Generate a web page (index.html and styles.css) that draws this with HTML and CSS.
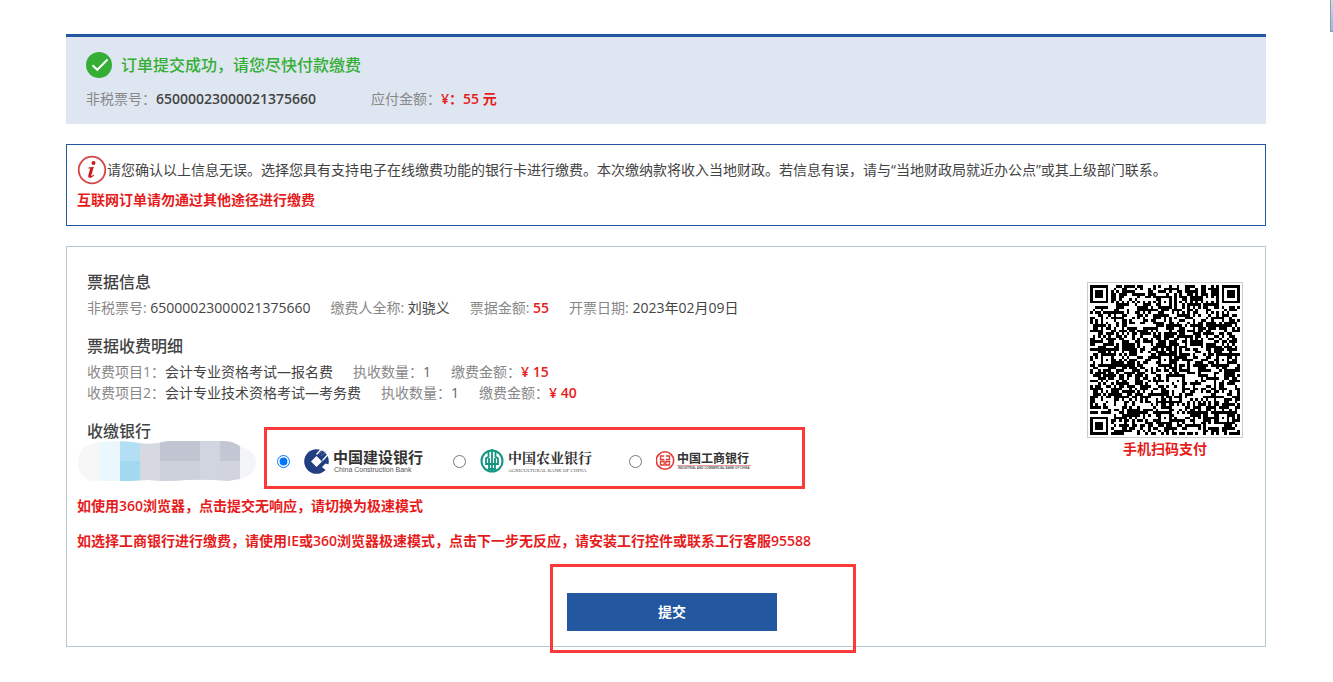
FILE: index.html
```html
<!DOCTYPE html>
<html lang="zh-CN">
<head>
<meta charset="utf-8">
<title>订单缴费</title>
<link rel="stylesheet" href="styles.css">
</head>
<body>
<main class="page">
  <header class="order">
    <div class="order-title">
      <svg class="order-icon" viewBox="0 0 26 26" aria-hidden="true"><circle cx="13" cy="13" r="13" fill="#35ae35"/><path d="M6.5 13.200l4.800 4.600L21.500 7.500" fill="none" stroke="#fff" stroke-width="2"/></svg>
      <h1>订单提交成功，请您尽快付款缴费</h1>
    </div>
    <p class="order-meta"><span>非税票号：<b class="dark">65000023000021375660</b></span><span>应付金额：<b class="red">¥：55 元</b></span></p>
  </header>

  <section class="notice">
    <p class="notice-text">
      <svg class="notice-icon" viewBox="0 0 30 30" aria-hidden="true"><circle cx="15" cy="15" r="13.300" fill="#fff" stroke="#d64545" stroke-width="1.800"/><circle cx="16.500" cy="8" r="2" fill="#c91c1c"/><path d="M11.500 12.500l5.300-.7-2.500 8.600q-.3 1.300 2.400-.6l.5.700q-3 2.900-5 2.300-1.500-.5-.9-2.500l1.900-6.700-1.900-.2z" fill="#c91c1c"/></svg>
      <span>请您确认以上信息无误。选择您具有支持电子在线缴费功能的银行卡进行缴费。本次缴纳款将收入当地财政。若信息有误，请与“当地财政局就近办公点”或其上级部门联系。</span>
    </p>
    <p class="notice-warn">互联网订单请勿通过其他途径进行缴费</p>
  </section>

  <form class="panel">
    <div class="details">
      <h2>票据信息</h2>
      <p class="line"><span>非税票号: <i>65000023000021375660</i></span><span>缴费人全称: <i>刘骁义</i></span><span>票据金额: <b class="red">55</b></span><span>开票日期: <i>2023年02月09日</i></span></p>
      <h2>票据收费明细</h2>
      <p class="line"><span>收费项目1：<i>会计专业资格考试—报名费</i></span><span>执收数量：<em>1</em></span><span>缴费金额：<b class="red">¥ 15</b></span></p>
      <p class="line"><span>收费项目2：<i>会计专业技术资格考试—考务费</i></span><span>执收数量：<em>1</em></span><span>缴费金额：<b class="red">¥ 40</b></span></p>
      <h2>收缴银行</h2>
      <div class="banks">
        <svg class="mosaic" viewBox="0 0 178 40" aria-hidden="true">
          <clipPath id="blob"><path d="M0 22Q0 5 16 2Q36-1 55 1Q66 4 80 2Q90-1 102 0H146Q156 0 163 6Q178 10 178 22Q177 34 162 38L150 40Q130 38 108 39Q88 41 70 39Q45 41 14 40Q0 36 0 22z"/></clipPath>
          <g clip-path="url(#blob)">
            <path fill="#f7f7f8" d="M0 0h178v40H0z"/>
            <path fill="#eaf7fd" d="M22 0h20v40H22z"/>
            <path fill="#b3dff4" d="M42 0h20v20H42z"/><path fill="#a3d9f0" d="M42 20h20v20H42z"/>
            <path fill="#d6d9e2" d="M62 0h20v40H62z"/>
            <path fill="#c1c5d2" d="M82 0h40v20H82z"/><path fill="#cdd1dc" d="M82 20h40v20H82z"/>
            <path fill="#d1d5df" d="M122 0h20v40h-20z"/>
            <path fill="#c3c7d3" d="M142 0h20v20h-20z"/><path fill="#d1d4df" d="M142 20h20v20h-20z"/>
            <path fill="#f4f5f8" d="M162 0h16v40h-16z"/>
          </g>
        </svg>
        <div class="bank-choices mark">
          <label class="bank"><input type="radio" name="bank" checked aria-label="中国建设银行">
            <svg viewBox="0 0 120 30"><circle cx="12.500" cy="15.500" r="12.300" fill="#213f80"/><path d="M25 18.500L21.500 17.500 18 21l4 3.500 5-3z" fill="#fff"/><path d="M12.500 10l5.500 5.500-5.500 5.500L7 15.500z" fill="#fff"/><path d="M12.500 8.500l4-4.500 4-1M18.500 14.500l6-6.500" fill="none" stroke="#fff" stroke-width="1.300"/><path d="M15 8l4.500-4.500M17 10l5-4.500" stroke="#8796bd" stroke-width=".6"/><text class="logo-cn" x="29" y="17" font-size="15">中国建设银行</text><text class="logo-en" x="30" y="26" font-size="7">China Construction Bank</text></svg>
          </label>
          <label class="bank"><input type="radio" name="bank" aria-label="中国农业银行">
            <svg viewBox="0 0 120 30"><circle cx="12" cy="15" r="10.500" fill="#fff" stroke="#129580" stroke-width="2"/><g fill="none" stroke="#129580" stroke-width="1.800"><path d="M12 3v23"/><path d="M8.500 5v5.500l-2.500 2v5.500h12v-5.500l-2.500-2V5"/><path d="M9 12v11h6V12"/></g><text class="logo-cn logo-serif" x="28" y="17" font-size="14">中国农业银行</text><text class="logo-en logo-serif" x="28" y="26" font-size="5">AGRICULTURAL BANK OF CHINA</text></svg>
          </label>
          <label class="bank"><input type="radio" name="bank" aria-label="中国工商银行">
            <svg viewBox="0 0 120 30"><circle cx="9" cy="14.500" r="8.700" fill="#fff" stroke="#e43b35" stroke-width="1.600"/><path d="M8.200 10H4.500v3.500h3.700M4.500 15.500h3.700V19H4.500zM9.800 10h3.700v3.500H9.800M13.500 15.500H9.800V19h3.700z" fill="none" stroke="#e43b35" stroke-width="1.300"/><text class="logo-cn" x="21" y="17" font-size="12">中国工商银行</text><path d="M21 19.500h74" stroke="#eb9c9c"/><text class="logo-en" x="22" y="23" font-size="3" font-weight="700">INDUSTRIAL AND COMMERCIAL BANK OF CHINA</text></svg>
          </label>
        </div>
      </div>
      <p class="tip">如使用360浏览器，点击提交无响应，请切换为极速模式</p>
      <p class="tip">如选择工商银行进行缴费，请使用IE或360浏览器极速模式，点击下一步无反应，请安装工行控件或联系工行客服95588</p>
    </div>
    <figure class="qr">
      <svg class="qr-code" viewBox="0 0 57 57" shape-rendering="crispEdges" role="img" aria-label="付款二维码"><path id="qr-modules"/></svg>
      <figcaption>手机扫码支付</figcaption>
    </figure>
    <div class="actions"><div class="submit-wrap mark"><button class="submit" type="button">提交</button></div></div>
  </form>
</main>
<div class="edge" aria-hidden="true"></div>
<script src="qr.js"></script>
</body>
</html>
```
FILE: styles.css
```css
* { box-sizing: border-box; }

body {
  margin: 0;
  padding-right: 1px;
  background: #fff;
  color: #444;
  font: 14px/21px "Open Sans", "Noto Sans CJK SC", sans-serif;
}

h1, h2, p, figure { margin: 0; }
h1, h2 { font-size: 16px; line-height: 24px; font-weight: 500; }
i, em { font-style: normal; }
i { color: #444; }
em { color: #666; }
b { font-weight: 600; }

.page {
  max-width: 1200px;
  margin: 34px auto 32px;
  display: flex;
  flex-direction: column;
  gap: 20px;
}

.red { color: #e61c1c; }
.dark { color: #444; }

.order {
  padding: 15px 20px 15px;
  border-top: 3px solid #2357a0;
  background: #dee6f1;
}
.order-title { display: flex; align-items: center; gap: 9px; }
.order-title h1 { color: #35ae35; }
.order-icon { width: 26px; height: 26px; }
.order-meta { display: flex; gap: 55px; margin-top: 10px; color: #888; }

.notice { padding: 10px; border: 1px solid #2357a0; }
.notice-text { display: flex; align-items: center; min-height: 30px; line-height: 20px; }
.notice-icon { flex: none; width: 30px; height: 30px; }
.notice-warn { line-height: 30px; font-weight: 600; color: #e61c1c; }

.panel {
  display: grid;
  grid-template-columns: 1fr 156px;
  padding: 23px 22px 15px 10px;
  border: 1px solid #b6c8d1;
}
.details h2, .line { padding-left: 10px; }
.details h2 { margin-bottom: 3px; color: #444; }
.line { display: flex; gap: 20px; color: #888; }
.line + h2 { margin-top: 16px; }

.banks { display: flex; align-items: center; height: 42px; margin: -6px 0 13px 1px; }
.mosaic { flex: none; width: 178px; height: 40px; }
.bank-choices { display: flex; align-items: center; margin-left: 21px; }
.bank { display: flex; align-items: center; width: 176px; }
.bank input { flex: none; width: 13px; height: 13px; margin: 0 14px 0 0; }
.bank svg { flex: none; width: 120px; height: 30px; }
.logo-cn { font-family: "Noto Sans CJK SC", sans-serif; font-weight: 700; fill: #333; }
.logo-en { font-family: "Liberation Sans", sans-serif; fill: #555; }
.logo-serif { font-family: "Liberation Serif", "Noto Serif CJK SC", "Noto Sans CJK SC", serif; }

/* Highlight frames drawn over the content they point at. */
.mark { position: relative; }
.mark::after { content: ""; position: absolute; border: 3px solid #fd3a3a; pointer-events: none; }
.bank-choices::after { inset: -19px 0 -13px -13px; }
.submit-wrap::after { inset: -29px -79px -22px -17px; }

.tip { font-weight: 600; color: #e61c1c; }
.tip + .tip { margin-top: 14px; }

.qr { margin-top: 12px; text-align: center; font-weight: 600; color: #e61c1c; }
.qr-code { display: block; width: 156px; height: 156px; padding: 2px; border: 1px solid #ccc; }

.actions { grid-column: 1 / -1; display: flex; justify-content: center; margin-top: 42px; padding-left: 24px; }
.submit {
  display: block;
  width: 210px;
  height: 38px;
  padding: 0;
  border: 0;
  background: #2357a0;
  color: #fff;
  font: inherit;
  line-height: 20px;
  font-weight: 600;
}

.edge {
  position: absolute;
  top: 0;
  right: 0;
  width: 3px;
  height: 32px;
  border-left: 1px solid #999;
  border-bottom: 1px solid #999;
  background: linear-gradient(#cddcec, #8ab8f8);
}
```
FILE: qr.js
```js
// Fills the 57 x 57 module grid of the payment code.
const size = 57;
let seed = 20230209;
const random = () => {
  seed = (Math.imul(seed, 1664525) + 1013904223) >>> 0;
  return seed / 4294967296;
};
const grid = Array.from({ length: size }, () =>
  Array.from({ length: size }, () => random() < 0.54));

function rings(cx, cy, radius, light) {
  for (let y = -radius; y <= radius; y++) {
    for (let x = -radius; x <= radius; x++) {
      const row = grid[cy + y];
      if (row && cx + x >= 0 && cx + x < size) {
        row[cx + x] = !light.includes(Math.max(Math.abs(x), Math.abs(y)));
      }
    }
  }
}

for (let n = 8; n < size - 8; n++) grid[6][n] = grid[n][6] = n % 2 === 0;
for (const [x, y] of [[28, 6], [6, 28], [28, 28], [50, 28], [28, 50], [50, 50]]) {
  rings(x, y, 2, [1]);
}
for (const [x, y] of [[3, 3], [53, 3], [3, 53]]) rings(x, y, 4, [2, 4]);

let d = "";
grid.forEach((row, y) => row.forEach((on, x) => { if (on) d += `M${x} ${y}h1v1h-1z`; }));
document.getElementById("qr-modules").setAttribute("d", d);
```
